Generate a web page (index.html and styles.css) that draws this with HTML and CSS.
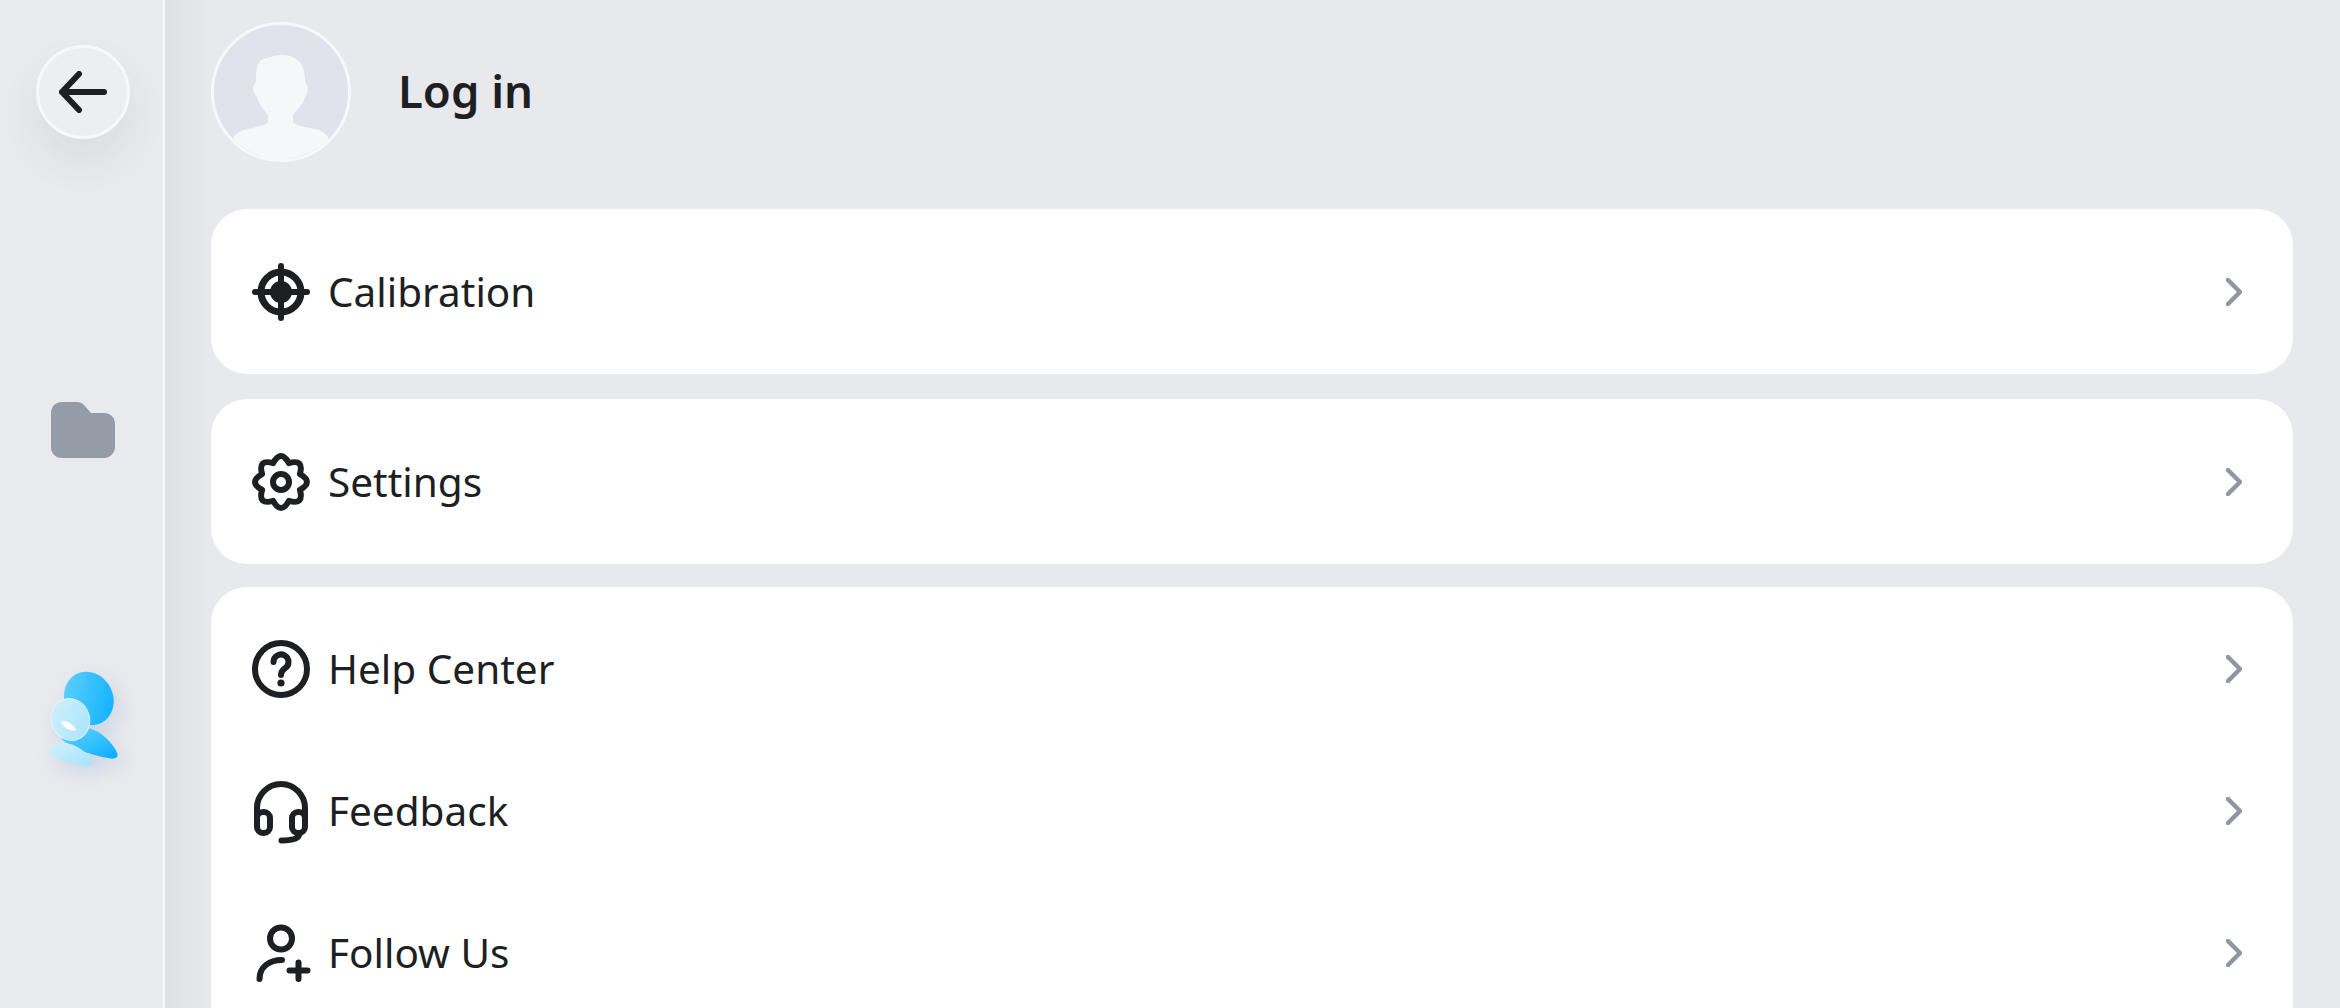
FILE: index.html
```html
<!DOCTYPE html>
<html lang="en">
<head>
    <meta charset="UTF-8">
    <title>Log in</title>
    <link rel="stylesheet" href="styles.css">
</head>
<body>
    <div class="app">
        <aside class="sidebar">
            <button class="back">
                <svg width="48" height="42" viewBox="0 0 48 42"><path class="line" d="M45 21H3M20 3 3 21l17 18"/></svg>
            </button>
            <svg class="folder" width="66" height="56" viewBox="0 0 66 56"><path d="M12 0h15c3 0 5 1 7 3l7 8h13c6 0 11 4 11 11v23c0 6-5 11-11 11H12C5 56 1 51 1 45V11C1 5 5 0 12 0z"/></svg>
            <svg class="mascot" width="72" height="97" viewBox="80 90 215 290">
                <defs>
                    <linearGradient id="blue" x1="0" y1="0" x2="1" y2="1">
                        <stop offset="0" stop-color="#68d2ff"/>
                        <stop offset="1" stop-color="#05aefe"/>
                    </linearGradient>
                    <linearGradient id="glass" x1="0" y1="0" x2="1" y2="1">
                        <stop offset="0" stop-color="#d2f1fc"/>
                        <stop offset="1" stop-color="#a5e3fb"/>
                    </linearGradient>
                </defs>
                <ellipse cx="205" cy="172" rx="72" ry="82" transform="rotate(-28 205 172)" fill="url(#blue)"/>
                <path d="M122 292C160 280 180 258 210 263C245 272 285 315 291 340C292 350 280 354 268 351C220 345 150 320 122 292z" fill="url(#blue)"/>
                <ellipse cx="150" cy="235" rx="57" ry="63" transform="rotate(-18 150 235)" fill="url(#glass)" stroke="#dcf5fd" stroke-width="3"/>
                <path d="M122 242C135 236 155 245 168 266C150 272 130 262 122 242z" fill="#fff"/>
                <path d="M84 330C90 310 125 298 155 310C185 322 210 345 217 362C218 372 208 376 198 373C160 368 95 355 84 330z" fill="url(#glass)"/>
            </svg>
        </aside>

        <main class="main">
            <header class="profile">
                <div class="avatar">
                    <svg width="140" height="140" viewBox="0 0 140 140"><path d="M70 33C62 33 58 36 52 37C46 40 45 48 45 58C45 62 42 63 42 67C42 71 46 74 47 78C49 85 54 88 57 93V100C56 104 44 105 36 107C28 109 24 112 22 117L30 140H110L118 117C116 112 110 108 104 107C96 105 84 104 82 100V93C85 88 90 85 93 78C94 74 97 71 97 67C97 63 94 62 94 58C94 46 90 33 70 33z"/></svg>
                </div>
                <h1>Log in</h1>
            </header>

            <section class="card">
                <div class="row">
                    <svg class="icon" viewBox="0 0 58 58"><circle class="line thick" cx="29" cy="29" r="20"/><path class="line" d="M3 29H55M29 3V55"/><circle class="dot" cx="29" cy="29" r="11"/></svg>
                    <span>Calibration</span>
                    <svg class="chevron" width="16" height="28" viewBox="0 0 16 28"><path d="M2 2 14 14 2 26"/></svg>
                </div>
            </section>

            <section class="card">
                <div class="row">
                    <svg class="icon" viewBox="0 0 58 58"><path class="line" d="M47.9 36.85Q52.3 52.3 36.85 47.9Q29 62 21.15 47.9Q5.7 52.3 10.1 36.85Q-4 29 10.1 21.15Q5.7 5.7 21.15 10.1Q29 -4 36.85 10.1Q52.3 5.7 47.9 21.15Q62 29 47.9 36.85z"/><circle class="line" cx="29" cy="29" r="8"/></svg>
                    <span>Settings</span>
                    <svg class="chevron" width="16" height="28" viewBox="0 0 16 28"><path d="M2 2 14 14 2 26"/></svg>
                </div>
            </section>

            <section class="card card-list">
                <div class="row">
                    <svg class="icon" viewBox="0 0 58 58"><circle class="line" cx="29" cy="29" r="26"/><path class="line" d="M21.5 22a7.5 7.5 0 1 1 11.5 6.3c-2.5 1.7-4 3-4 6.7"/><circle class="dot" cx="29" cy="43" r="3.6"/></svg>
                    <span>Help Center</span>
                    <svg class="chevron" width="16" height="28" viewBox="0 0 16 28"><path d="M2 2 14 14 2 26"/></svg>
                </div>
                <div class="row">
                    <svg class="icon" viewBox="0 0 58 58"><path class="line" d="M5 40V26a24 24 0 0 1 48 0V40"/><rect class="line" x="5" y="30" width="13" height="21" rx="6"/><rect class="line" x="40" y="30" width="13" height="21" rx="6"/><path class="line" d="M47.500 51c0 5-6 7.500-18 7.500"/></svg>
                    <span>Feedback</span>
                    <svg class="chevron" width="16" height="28" viewBox="0 0 16 28"><path d="M2 2 14 14 2 26"/></svg>
                </div>
                <div class="row">
                    <svg class="icon" viewBox="0 0 58 58"><circle class="line" cx="29" cy="14.500" r="11"/><path class="line" d="M7.500 55C7.500 43 17 36 30 36M46.500 38.500V55M37.500 46.500H55.500"/></svg>
                    <span>Follow Us</span>
                    <svg class="chevron" width="16" height="28" viewBox="0 0 16 28"><path d="M2 2 14 14 2 26"/></svg>
                </div>
            </section>
        </main>
    </div>
</body>
</html>
```
FILE: styles.css
```css
* {
    box-sizing: border-box;
}
body {
    margin: 0;
    height: 1008px;
    overflow: hidden;
    background: #e8e9ed;
    color: #1d1f23;
    font-family: "Noto Sans", Arial, sans-serif;
}
.app {
    display: flex;
    height: 1008px;
}
.sidebar {
    flex: 0 0 165px;
    display: flex;
    flex-direction: column;
    align-items: center;
    padding: 45px 0 0 2px;
    background: #e9eaee;
    border-right: 2px solid #f7f8fa;
}
.back {
    width: 94px;
    height: 94px;
    padding: 0;
    display: flex;
    align-items: center;
    justify-content: center;
    border: 3px solid #f7f8fa;
    border-radius: 50%;
    background: #eceef1;
    box-shadow: 0 22px 40px rgba(60, 66, 80, 0.08);
}
.folder {
    margin-top: 263px;
    fill: #969ca7;
}
.mascot {
    margin-top: 213px;
    filter: drop-shadow(6px 8px 10px rgba(70, 130, 180, 0.18));
}
.main {
    flex: 1;
    display: flex;
    flex-direction: column;
    height: 1008px;
    overflow: hidden;
    padding: 22px 47px 0 46px;
    background: linear-gradient(90deg, #dfe0e5, #e8e9ed 44px);
}
.profile {
    display: flex;
    flex: none;
    align-items: center;
    gap: 47px;
    height: 140px;
    margin-bottom: 47px;
}
.avatar {
    width: 140px;
    height: 140px;
    border: 3px solid #f7f8fa;
    border-radius: 50%;
    background: #e0e3eb;
    overflow: hidden;
}
.avatar svg {
    display: block;
    margin: -3px;
    fill: #f6f7f9;
}
h1 {
    margin: -5px 0 0;
    font-size: 45.5px;
    font-weight: 600;
}
.card {
    flex: none;
    background: #fff;
    border-radius: 36px;
    margin-bottom: 25px;
}
.card-list {
    flex: 1;
    min-height: 0;
    overflow: hidden;
    margin: -2px 0 0;
    padding-top: 11px;
    border-radius: 36px 36px 0 0;
}
.row {
    display: flex;
    align-items: center;
    height: 165px;
    padding: 0 51px 0 41px;
    font-size: 40.5px;
}
.card-list .row {
    height: 142px;
}
.row span {
    flex: 1;
    margin: -1px 0 0 18px;
}
.icon {
    width: 58px;
    height: 58px;
    overflow: visible;
}
.line {
    fill: none;
    stroke: #1d1f23;
    stroke-width: 6;
    stroke-linecap: round;
    stroke-linejoin: round;
}
.thick {
    stroke-width: 7;
}
.dot {
    fill: #1d1f23;
}
.chevron {
    fill: none;
    stroke: #8f97a3;
    stroke-width: 4.500;
    stroke-linecap: round;
    stroke-linejoin: round;
}
```
